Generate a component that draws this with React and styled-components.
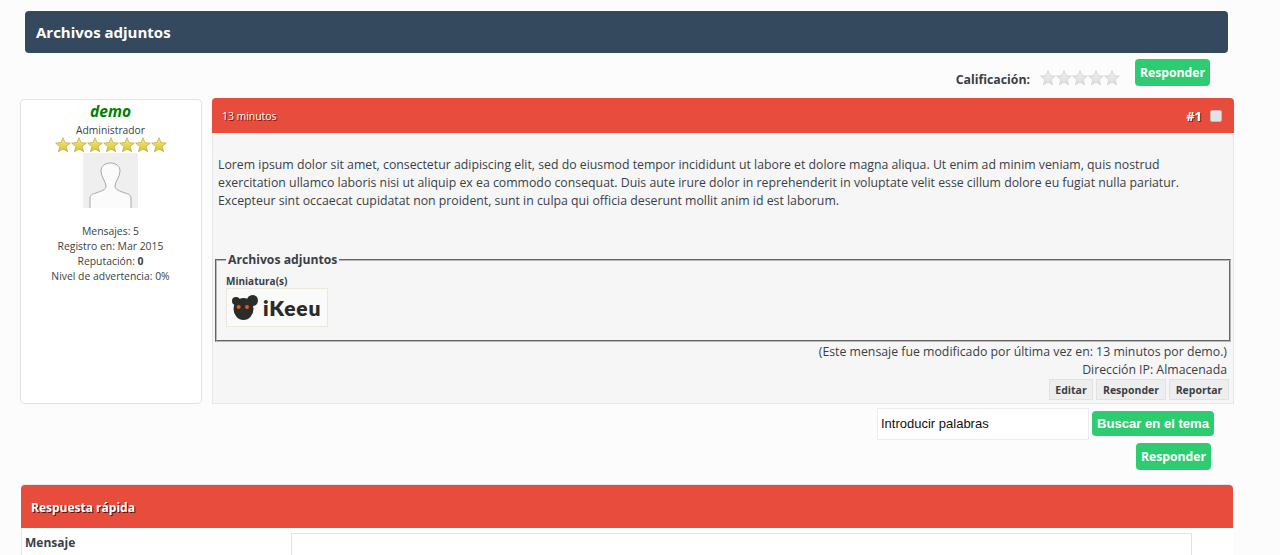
import React from 'react';
import styled, { createGlobalStyle } from 'styled-components';

const Global = createGlobalStyle`
    html, body {
        margin: 0;
        height: 555px;
        overflow: hidden;
        background: #fcfcfc;
        font-family: 'Open Sans', sans-serif;
        color: #3a3f47;
    }
`;

// whole page column
const Page = styled.div`
    display: flex;
    flex-direction: column;
    width: 1214px;
    height: 544px;
    margin-left: 20px;
    padding-top: 11px;
    overflow: hidden;
`;

// dark title on top
const TitleBar = styled.div`
    display: flex;
    align-items: center;
    box-sizing: border-box;
    flex: none;
    width: 1203px;
    height: 42px;
    margin-left: 5px;
    padding-left: 11px;
    background: #34495e;
    border-radius: 4px;
    color: #fff;
    font-size: 15px;
    font-weight: 700;
`;

// rating + reply
const RatingRow = styled.div`
    display: flex;
    justify-content: flex-end;
    align-items: flex-start;
    flex: none;
    height: 45px;
    padding: 6px 24px 0 0;
    box-sizing: border-box;
`;

const RatingLabel = styled.span`
    margin: 13px 10px 0 0;
    font-size: 12.3px;
    line-height: 16px;
    font-weight: 700;
`;

const RatingStars = styled.div`
    display: flex;
    margin: 11px 15px 0 0;
`;

const GreenButton = styled.button`
    box-sizing: border-box;
    width: ${props => props.$width}px;
    height: ${props => props.$height || 27}px;
    margin-bottom: ${props => props.$lift || 0}px;
    padding: 0;
    border: 0;
    border-radius: 4px;
    background: #2ecc71;
    color: #fff;
    font-family: ${props => props.$arial ? "'Liberation Sans', sans-serif" : "'Open Sans', sans-serif"};
    font-size: ${props => props.$arial ? 13.1 : 12.2}px;
    font-weight: 700;
    white-space: nowrap;
`;

// author box + post
const PostRow = styled.div`
    display: flex;
    align-items: stretch;
    flex: none;
    gap: 10px;
    height: 306px;
`;

const Author = styled.div`
    display: flex;
    flex-direction: column;
    align-items: center;
    box-sizing: border-box;
    width: 182px;
    margin-top: 1px;
    padding-right: 1px;
    background: #fff;
    border: 1px solid #e3e3e3;
    border-radius: 4px;
`;

const AuthorName = styled.div`
    color: #008000;
    font-size: 15.5px;
    line-height: 22px;
    font-weight: 700;
    font-style: italic;
`;

const AuthorRole = styled.div`
    font-size: 10.3px;
    line-height: 14px;
    margin-top: 1px;
`;

const StarRow = styled.div`
    display: flex;
    height: 16px;
`;

const Avatar = styled.div`
    width: 55px;
    height: 55px;
    background: #efefef;
    line-height: 0;
`;

const AuthorStats = styled.div`
    margin-top: 16px;
    font-size: 10.4px;
    line-height: 15px;
    text-align: center;
`;

const Post = styled.div`
    display: flex;
    flex-direction: column;
    flex: 1;
    background: #f6f6f6;
    border-right: 1px solid #e6e6e6;
    border-bottom: 1px solid #e6e6e6;
    border-left: 1px solid #e6e6e6;
    border-radius: 4px 4px 0 0;
`;

const PostHead = styled.div`
    display: flex;
    align-items: center;
    justify-content: space-between;
    flex: none;
    height: 35px;
    margin: 0 -1px;
    padding: 0 12px 0 10px;
    background: #e74c3c;
    border-radius: 4px 4px 0 0;
    color: #fff;
    font-size: 10.4px;
    text-shadow: 1px 1px 0 #7a1a10;
`;

const PostNumber = styled.div`
    display: flex;
    align-items: center;
    gap: 8px;
    font-size: 13px;
    font-weight: 700;
`;

const CheckBox = styled.span`
    box-sizing: border-box;
    width: 12px;
    height: 12px;
    background: #e2e2e2;
    border: 1px solid #bdbdbd;
    border-radius: 2px;
`;

const PostText = styled.p`
    flex: none;
    margin: 23px 0 0 5px;
    width: 1005px;
    height: 76px;
    font-size: 12.3px;
    line-height: 18px;
`;

const Attachments = styled.fieldset`
    box-sizing: border-box;
    flex: none;
    height: 90px;
    margin: 20px 2px 0;
    padding: 0 0 0 9px;
    border: 2px groove #b8b8b8;
`;

const Legend = styled.legend`
    padding: 0 2px;
    font-size: 12.2px;
    line-height: 16px;
    font-weight: 700;
`;

const ThumbLabel = styled.div`
    margin-top: 7px;
    font-size: 10px;
    line-height: 12px;
    font-weight: 700;
`;

const Thumb = styled.div`
    display: flex;
    align-items: center;
    gap: 5px;
    box-sizing: border-box;
    width: 102px;
    height: 39px;
    margin-top: 1px;
    padding-left: 5px;
    background: #fafafa;
    border: 1px solid #ece8da;
`;

const ThumbWord = styled.span`
    color: #2b2b2b;
    font-family: 'Lato', sans-serif;
    font-size: 21px;
    line-height: 24px;
    font-weight: 800;
    letter-spacing: 0.8px;
`;

const EditNote = styled.div`
    margin: 1px 6px 0 0;
    font-size: 12.3px;
    line-height: 18px;
    text-align: right;
`;

const PostActions = styled.div`
    display: flex;
    justify-content: flex-end;
    gap: 3px;
    margin: 0 4px 0 0;
`;

const ActionButton = styled.button`
    box-sizing: border-box;
    width: ${props => props.$width}px;
    height: 21px;
    padding: 0;
    background: #eee;
    border: 1px solid #e2e2e2;
    color: #3a3f47;
    font-family: 'Open Sans', sans-serif;
    font-size: 10.5px;
    font-weight: 700;
`;

const SearchRow = styled.div`
    display: flex;
    align-items: center;
    justify-content: flex-end;
    flex: none;
    gap: 3px;
    height: 32px;
    margin-top: 4px;
    padding-right: 20px;
`;

const SearchBox = styled.div`
    display: flex;
    align-items: center;
    box-sizing: border-box;
    width: 212px;
    height: 32px;
    padding: 0 0 2px 3px;
    background: #fff;
    border: 1px solid #ececec;
    color: #111;
    font-family: 'Liberation Sans', sans-serif;
    font-size: 13px;
`;

const ReplyRow = styled.div`
    display: flex;
    justify-content: flex-end;
    flex: none;
    margin-top: 3px;
    padding-right: 23px;
`;

const QuickReply = styled.div`
    flex: none;
    margin: 14px 0 0 1px;
    width: 1212px;
    background: #fff;
    border-top: 1px solid #e6e6e6;
    border-radius: 4px 4px 0 0;
`;

const QuickHead = styled.div`
    display: flex;
    align-items: center;
    box-sizing: border-box;
    height: 43px;
    padding: 1px 0 0 10px;
    background: #e74c3c;
    border-radius: 4px 4px 0 0;
    color: #fff;
    font-size: 12px;
    font-weight: 700;
    text-shadow: 1px 1px 0 #5a0f08;
`;

const QuickBody = styled.div`
    display: grid;
    grid-template-columns: 269px 901px;
    box-sizing: border-box;
    height: 27px;
    padding-top: 5px;
    border-left: 1px solid #e6e6e6;
    overflow: hidden;
`;

const FieldLabel = styled.div`
    padding: 2px 0 0 3px;
    font-size: 12px;
    line-height: 16px;
    font-weight: 700;
`;

const MessageBox = styled.div`
    height: 60px;
    background: #fff;
    border: 1px solid #e3e3e3;
`;

// star drawn with gradient, gold or empty
const Star = ({ id, size, from, to, line }) => (
    <svg width={size} height={size} viewBox="0 0 24 24">
        <defs>
            <linearGradient id={id} x1="0" y1="0" x2="0" y2="1">
                <stop offset="0" stopColor={from} />
                <stop offset="1" stopColor={to} />
            </linearGradient>
        </defs>
        <path
            d="M12 1l3 7.4 8 .7-6.100 5.200 1.900 7.800-6.800-4.200-6.800 4.200 1.900-7.800L1 9.100l8-.7z"
            fill={`url(#${id})`}
            stroke={line}
            strokeWidth="1"
            strokeLinejoin="round"
        />
    </svg>
);

const Silhouette = () => (
    <svg width="55" height="55" viewBox="0 0 55 55">
        <path
            d="M7 55V46C7 42 9 41 13 40C18 38 23 37 23 33C23 29 18 24 18 18C18 13 22 10 27.500 10C33 10 37 13 37 18C37 24 32 29 32 33C32 37 37 38 42 40C46 41 48 42 48 46V55"
            fill="#fbfbfb"
            stroke="#a8a8a8"
            strokeWidth="1"
        />
    </svg>
);

const Bear = () => (
    <svg width="26" height="25" viewBox="0 0 26 25">
        <circle cx="4" cy="6" r="4" fill="#2b2b2b" />
        <circle cx="20.500" cy="5.500" r="5.500" fill="#2b2b2b" />
        <ellipse cx="11.500" cy="14" rx="10" ry="11" fill="#2b2b2b" />
        <circle cx="6.700" cy="12" r="2" fill="#e8590c" />
        <circle cx="15" cy="12" r="2" fill="#e8590c" />
    </svg>
);

const App = () => {
    return (
        <Page>
            <Global />
            <TitleBar>Archivos adjuntos</TitleBar>
            <RatingRow>
                <RatingLabel>Calificación:</RatingLabel>
                <RatingStars>
                    {[0, 1, 2, 3, 4].map(i => (
                        <Star key={i} id={`empty${i}`} size={16} from="#f2f2f2" to="#dcdcdc" line="#c9c9c9" />
                    ))}
                </RatingStars>
                <GreenButton $width={75}>Responder</GreenButton>
            </RatingRow>
            <PostRow>
                <Author>
                    <AuthorName>demo</AuthorName>
                    <AuthorRole>Administrador</AuthorRole>
                    <StarRow>
                        {[0, 1, 2, 3, 4, 5, 6].map(i => (
                            <Star key={i} id={`gold${i}`} size={16} from="#f6ec8a" to="#d9c12e" line="#b8a53a" />
                        ))}
                    </StarRow>
                    <Avatar><Silhouette /></Avatar>
                    <AuthorStats>
                        <div>Mensajes: 5</div>
                        <div>Registro en: Mar 2015</div>
                        <div>Reputación: <b>0</b></div>
                        <div>Nivel de advertencia: 0%</div>
                    </AuthorStats>
                </Author>
                <Post>
                    <PostHead>
                        <span>13 minutos</span>
                        <PostNumber>#1 <CheckBox /></PostNumber>
                    </PostHead>
                    <PostText>
                        Lorem ipsum dolor sit amet, consectetur adipiscing elit, sed do eiusmod tempor incididunt ut labore et dolore magna aliqua. Ut enim ad minim veniam, quis nostrud exercitation ullamco laboris nisi ut aliquip ex ea commodo consequat. Duis aute irure dolor in reprehenderit in voluptate velit esse cillum dolore eu fugiat nulla pariatur. Excepteur sint occaecat cupidatat non proident, sunt in culpa qui officia deserunt mollit anim id est laborum.
                    </PostText>
                    <Attachments>
                        <Legend>Archivos adjuntos</Legend>
                        <ThumbLabel>Miniatura(s)</ThumbLabel>
                        <Thumb>
                            <Bear />
                            <ThumbWord>iKeeu</ThumbWord>
                        </Thumb>
                    </Attachments>
                    <EditNote>
                        (Este mensaje fue modificado por última vez en: 13 minutos por demo.)
                        <br />
                        Dirección IP: Almacenada
                    </EditNote>
                    <PostActions>
                        <ActionButton $width={44}>Editar</ActionButton>
                        <ActionButton $width={70}>Responder</ActionButton>
                        <ActionButton $width={60}>Reportar</ActionButton>
                    </PostActions>
                </Post>
            </PostRow>
            <SearchRow>
                <SearchBox>Introducir palabras</SearchBox>
                <GreenButton $arial $width={122} $height={25} $lift={2}>Buscar en el tema</GreenButton>
            </SearchRow>
            <ReplyRow>
                <GreenButton $width={75}>Responder</GreenButton>
            </ReplyRow>
            <QuickReply>
                <QuickHead>Respuesta rápida</QuickHead>
                <QuickBody>
                    <FieldLabel>Mensaje</FieldLabel>
                    <MessageBox />
                </QuickBody>
            </QuickReply>
        </Page>
    );
};

export default App;
